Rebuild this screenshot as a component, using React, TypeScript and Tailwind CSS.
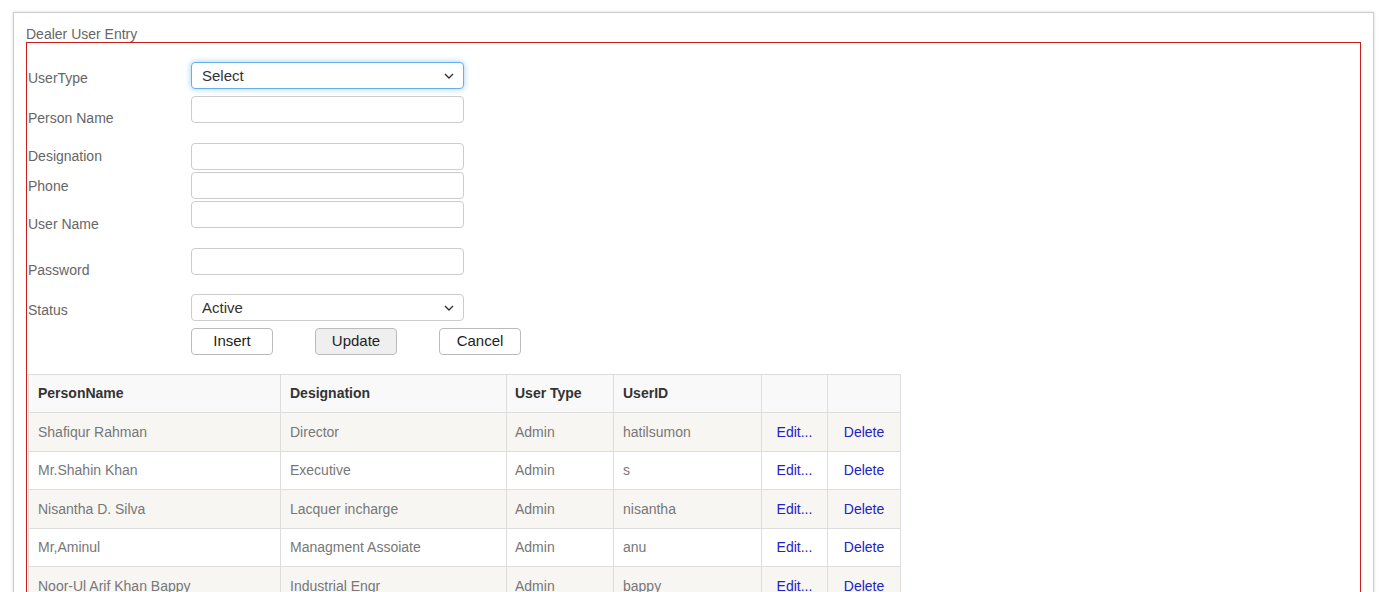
import React from "react";

const rows = [
  { name: "Shafiqur Rahman", designation: "Director", type: "Admin", id: "hatilsumon" },
  { name: "Mr.Shahin Khan", designation: "Executive", type: "Admin", id: "s" },
  { name: "Nisantha D. Silva", designation: "Lacquer incharge", type: "Admin", id: "nisantha" },
  { name: "Mr,Aminul", designation: "Managment Assoiate", type: "Admin", id: "anu" },
  { name: "Noor-Ul Arif Khan Bappy", designation: "Industrial Engr", type: "Admin", id: "bappy" },
];

function Chevron() {
  return (
    <svg width="10" height="6" viewBox="0 0 10 6" className="text-[#333]">
      <path d="M1 1l4 4 4-4" fill="none" stroke="currentColor" strokeWidth="1.4" />
    </svg>
  );
}

function FakeSelect({ value, focused }: { value: string; focused?: boolean }) {
  return (
    <div
      className={
        focused
          ? "w-[273px] h-[27px] rounded-[4px] border border-[#66afe9] shadow-[0_0_6px_rgba(102,175,233,0.6)] bg-white flex items-center justify-between pl-[10px] pr-[9px] pt-[1px] text-[15px] text-[#333]"
          : "w-[273px] h-[27px] rounded-[4px] border border-[#ccc] bg-white flex items-center justify-between pl-[10px] pr-[9px] pt-[1px] text-[15px] text-[#333]"
      }
    >
      <span>{value}</span>
      <Chevron />
    </div>
  );
}

function TextBox() {
  return <div className="w-[273px] h-[27px] rounded-[4px] border border-[#ccc] bg-white" />;
}

function Row({
  label,
  offset,
  mt,
  children,
}: {
  label: string;
  offset: string;
  mt: string;
  children: React.ReactNode;
}) {
  return (
    <div className={`flex items-start h-[27px] ${mt}`}>
      <div className={`w-[164px] shrink-0 text-[14px] leading-[16px] text-[#666] ${offset}`}>{label}</div>
      {children}
    </div>
  );
}

export default function App() {
  return (
    <div className="min-h-screen bg-white pt-[12px] pl-[13px] font-['Liberation_Sans',Arial,sans-serif]">
      <div className="w-[1361px] border border-[#ccc] shadow-[0_0_3px_rgba(0,0,0,0.15)] px-[12px] pt-[14px] pb-[20px]">
        <div className="text-[14px] leading-[15px] text-[#666]">Dealer User Entry</div>
        <div className="border border-[#c81e1e] pt-[19px] pb-[20px]">
          <Row label="UserType" offset="pt-[8px] pl-[1px]" mt="mt-0">
            <FakeSelect value="Select" focused />
          </Row>
          <Row label="Person Name" offset="pt-[14px] pl-[1px]" mt="mt-[7px]">
            <TextBox />
          </Row>
          <Row label="Designation" offset="pt-[5px] pl-[1px]" mt="mt-[20px]">
            <TextBox />
          </Row>
          <Row label="Phone" offset="pt-[6px] pl-[1px]" mt="mt-[2px]">
            <TextBox />
          </Row>
          <Row label="User Name" offset="pt-[15px] pl-[1px]" mt="mt-[2px]">
            <TextBox />
          </Row>
          <Row label="Password" offset="pt-[14px] pl-[1px]" mt="mt-[20px]">
            <TextBox />
          </Row>
          <Row label="Status" offset="pt-[8px] pl-[1px]" mt="mt-[19px]">
            <FakeSelect value="Active" />
          </Row>
          <div className="flex ml-[164px] mt-[7px] gap-[42px]">
            <button className="w-[82px] h-[27px] rounded-[4px] border border-[#bbb] bg-white text-[15px] text-[#222]">
              Insert
            </button>
            <button className="w-[82px] h-[27px] rounded-[4px] border border-[#bbb] bg-[#efefef] text-[15px] text-[#222]">
              Update
            </button>
            <button className="w-[82px] h-[27px] rounded-[4px] border border-[#bbb] bg-white text-[15px] text-[#222]">
              Cancel
            </button>
          </div>

          {/* user list */}
          <table className="ml-[1px] mt-[19px] border-collapse text-[14px]">
            <thead>
              <tr className="h-[38px] bg-[#f9f9f9]">
                <th className="w-[252px] border border-[#ddd] pl-[9px] text-left font-bold text-[#333]">PersonName</th>
                <th className="w-[226px] border border-[#ddd] pl-[9px] text-left font-bold text-[#333]">Designation</th>
                <th className="w-[107px] border border-[#ddd] pl-[8px] text-left font-bold text-[#333]">User Type</th>
                <th className="w-[148px] border border-[#ddd] pl-[9px] text-left font-bold text-[#333]">UserID</th>
                <th className="w-[66px] border border-[#ddd]"></th>
                <th className="w-[73px] border border-[#ddd]"></th>
              </tr>
            </thead>
            <tbody>
              {rows.map((r, i) => (
                <tr key={r.id} className={i % 2 === 0 ? "h-[39px] bg-[#f7f6f3]" : "h-[38px] bg-white"}>
                  <td className="border border-[#ddd] pl-[9px] text-[#777]">{r.name}</td>
                  <td className="border border-[#ddd] pl-[9px] text-[#777]">{r.designation}</td>
                  <td className="border border-[#ddd] pl-[8px] text-[#777]">{r.type}</td>
                  <td className="border border-[#ddd] pl-[9px] text-[#777]">{r.id}</td>
                  <td className="border border-[#ddd] text-center text-[#2222c4]">Edit...</td>
                  <td className="border border-[#ddd] text-center text-[#2222c4]">Delete</td>
                </tr>
              ))}
            </tbody>
          </table>
        </div>
      </div>
    </div>
  );
}
